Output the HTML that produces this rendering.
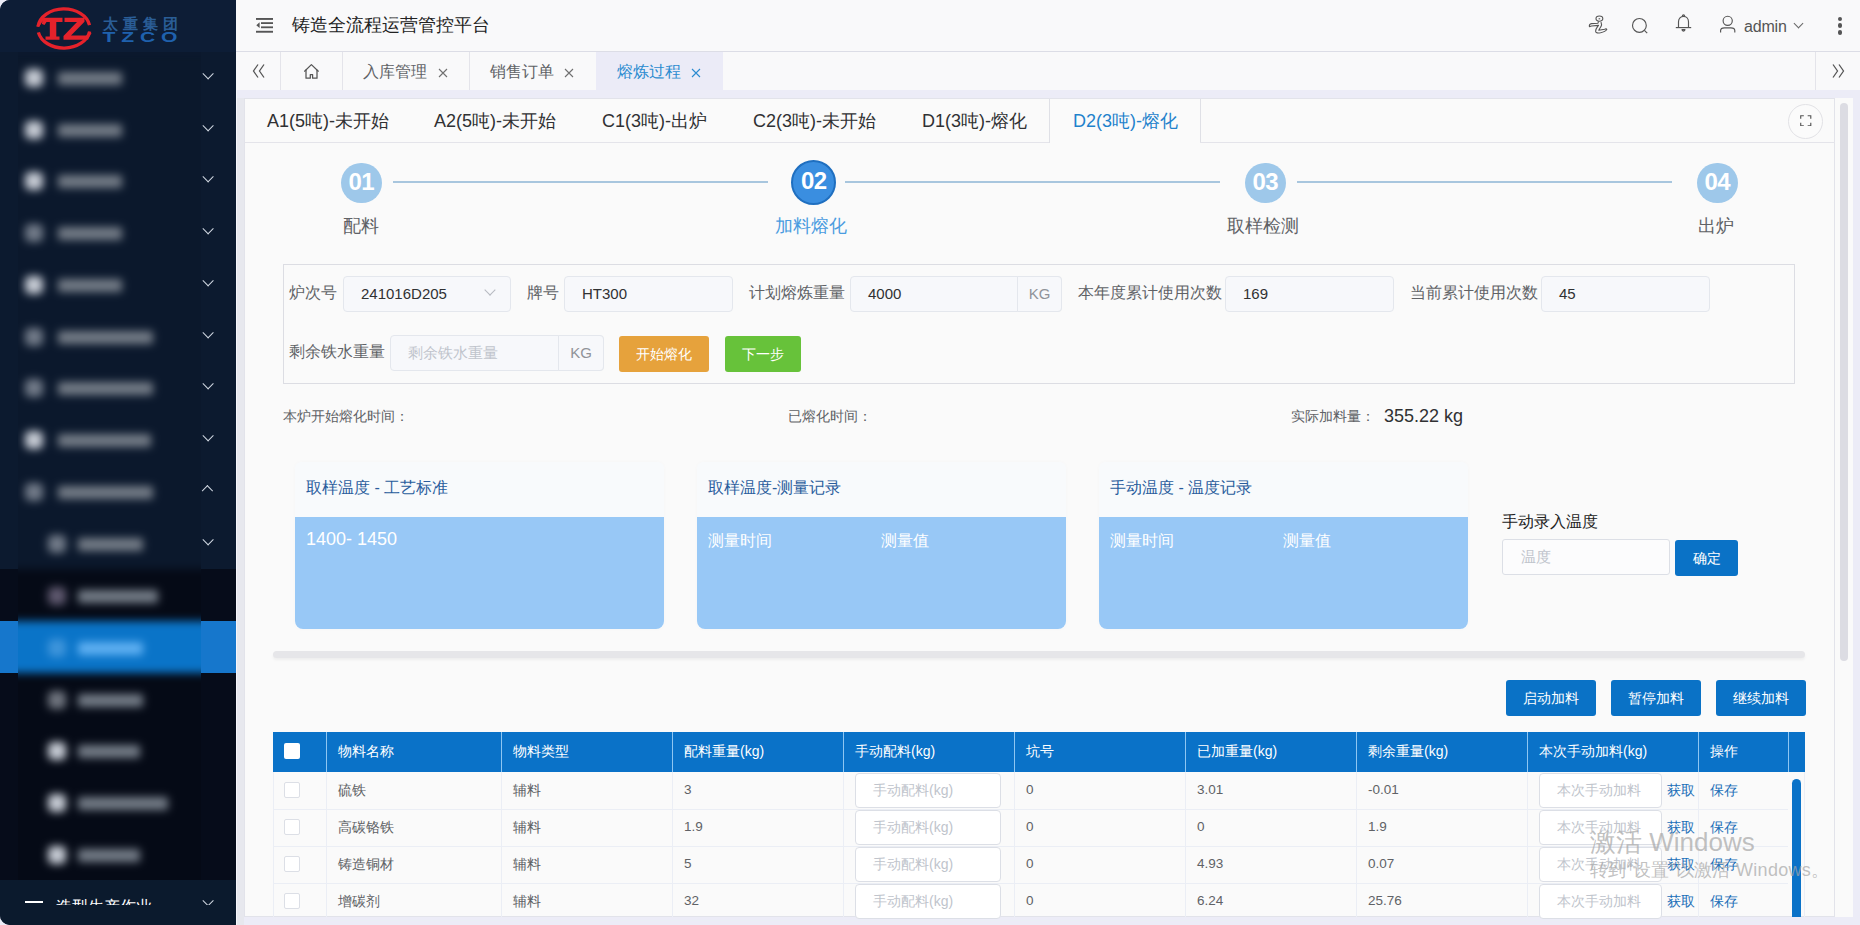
<!DOCTYPE html>
<html><head><meta charset="utf-8">
<style>
*{box-sizing:border-box;margin:0;padding:0}
html,body{width:1860px;height:925px;overflow:hidden;background:#ececf7;font-family:"Liberation Sans",sans-serif;color:#303133}
.a{position:absolute}
#side{left:0;top:0;width:236px;height:925px;background:#0c1a2f;border-radius:10px 0 0 10px;overflow:hidden}
.blur{filter:blur(4.5px)}
.mi{position:absolute;left:0;width:236px;height:52px}
.mi .ic{position:absolute;left:25px;top:17px;width:18px;height:18px;border-radius:5px;background:#c5cad3}
.mi .tx{position:absolute;left:58px;top:19.5px;height:13px;background:#737b86;border-radius:2px}
.chev{position:absolute;left:203.5px;width:7.5px;height:7.5px;border-left:1.7px solid #d3dae4;border-bottom:1.7px solid #d3dae4;transform:rotate(-45deg)}
.chev.up{transform:rotate(135deg)}
#hdr{left:236px;top:0;width:1624px;height:52px;background:#f9f9fa;border-bottom:1px solid #dcdde6}
#tabs{left:236px;top:52px;width:1624px;height:38px;background:#f9f9fa}
#card{left:244px;top:98px;width:1591px;height:819px;background:#fafafa;border:1px solid #e2e3ea}
.tab{top:10px;font-size:18px;line-height:24px;color:#303133;white-space:nowrap}
.step{top:162.5px;width:40.5px;height:40.5px;border-radius:50%;background:#9ec8ea;color:#fff;font-weight:bold;font-size:24px;line-height:37px;text-align:center;letter-spacing:-0.5px}
.step.act{top:160.3px;width:45px;height:45px;line-height:37px;background:#3a8ee0;border:2px solid #1f6fc0}
.slab{top:214px;width:80px;text-align:center;font-size:18px;line-height:24px;color:#606266}
.lbl{font-size:16px;line-height:20px;color:#606266;white-space:nowrap}
.inp{height:36px;border:1px solid #e4e7ed;border-radius:4px;background:#f7f8fb;font-size:15px;line-height:34px;padding-left:17px;color:#303133;white-space:nowrap}
.inp.ph{color:#c0c4cc;font-size:15px}
.app{height:36px;border:1px solid #e4e7ed;border-radius:0 4px 4px 0;background:#f7f8fb;font-size:15px;line-height:34px;text-align:center;color:#909399}
.btn{height:36px;border-radius:3px;color:#fff;font-size:14px;line-height:36px;text-align:center;white-space:nowrap}
.info{top:406px;font-size:14px;line-height:20px;color:#606266;white-space:nowrap}
.pnl{top:462px;width:369px;height:167px;background:#f8fafc;border-radius:6px;box-shadow:0 0 4px rgba(0,0,0,.02)}
.pt{position:absolute;left:11px;top:16px;font-size:16px;line-height:20px;color:#2a5d9c;white-space:nowrap}
.pb{position:absolute;left:0;top:55px;width:369px;height:112px;background:#98c8f6;border-radius:0 0 8px 8px;color:#fff;font-size:16px;line-height:20px;padding:14px 0 0 11px}
.btn2{top:680px;width:90px;height:36px;border-radius:3px;background:#0a72c6;color:#fff;font-size:14px;line-height:36px;text-align:center}
.th{top:741px;font-size:14px;line-height:20px;color:#fff;white-space:nowrap}
.td{font-size:14px;line-height:20px;color:#606266;white-space:nowrap}
.td.lk{color:#1a6fb8}
.tin{height:35px;border:1px solid #dcdfe6;border-radius:4px;background:#fff;font-size:14px;line-height:33px;padding-left:17px;color:#c0c4cc;white-space:nowrap;overflow:hidden}
</style></head><body>
<div id="side" class="a">
  <!-- logo -->
  <div class="a" style="left:0;top:0;width:236px;height:52px;background:#0d1d36"></div>
  <svg class="a" style="left:0;top:0" width="200" height="52" viewBox="0 0 200 52">
    <g fill="none" stroke="#e5222b" stroke-width="3.3">
      <path d="M38.06 26.31 A26 19.6 0 0 1 89.53 25.19"/>
      <path d="M89.59 31.5 A26 19.6 0 0 1 38.4 32.3"/>
    </g>
    <g fill="#e5222b">
      <path d="M42.5 17.7 H62.5 V22 H56.3 V36.6 H59.5 V39.8 H45.5 V36.6 H49.8 V22 H46.5 L44.5 25 L42 24 Z"/>
      <path d="M64.5 17.7 H84.5 V21.8 L71 35.6 H88 L89.6 31.5 L91.5 33 L88 39.8 H63.5 V36 L77 22 H64.5 Z"/>
      <path d="M36.2 26.6 L42.5 17.7 L44 19 L39 27 Z"/>
    </g>
    <text x="102.5" y="28.6" font-size="14.5" font-weight="bold" fill="#2a5d96" textLength="75" lengthAdjust="spacing">太重集团</text>
    <text x="102.5" y="42.2" font-size="14.5" font-weight="bold" fill="#1f61ad" textLength="75" lengthAdjust="spacingAndGlyphs" font-family="Liberation Sans" transform="translate(0,0)">T Z C O</text>
  </svg>
  <!-- bands (sharp) -->
  <div class="a" style="left:0;top:569px;width:236px;height:311px;background:#060c1a"></div>
  <div class="a" style="left:0;top:621px;width:236px;height:52px;background:#1677cc"></div>
  <div class="a" style="left:0;top:880px;width:236px;height:45px;background:#0b1a2d"></div>
  <!-- blurred region -->
  <div class="a" style="left:18px;top:52px;width:183px;height:828px;overflow:hidden">
   <div class="a blur" style="left:-40px;top:-20px;width:270px;height:870px">
    <div class="a" style="left:0;top:20px;width:270px;height:517px;background:#0b182c"></div>
    <div class="a" style="left:0;top:537px;width:270px;height:333px;background:#050a16"></div>
    <div class="a" style="left:0;top:589px;width:270px;height:52px;background:#0a74c8"></div>
    <div style="position:absolute;left:22px;top:20px">
    <div class="mi" style="top:0"><div class="ic"></div><div class="tx" style="width:64px"></div></div>
    <div class="mi" style="top:52px"><div class="ic"></div><div class="tx" style="width:64px"></div></div>
    <div class="mi" style="top:103px"><div class="ic"></div><div class="tx" style="width:64px"></div></div>
    <div class="mi" style="top:155px"><div class="ic" style="opacity:.55"></div><div class="tx" style="width:64px"></div></div>
    <div class="mi" style="top:207px"><div class="ic"></div><div class="tx" style="width:64px"></div></div>
    <div class="mi" style="top:259px"><div class="ic" style="opacity:.55"></div><div class="tx" style="width:95px"></div></div>
    <div class="mi" style="top:310px"><div class="ic" style="opacity:.55"></div><div class="tx" style="width:95px"></div></div>
    <div class="mi" style="top:362px"><div class="ic"></div><div class="tx" style="width:93px"></div></div>
    <div class="mi" style="top:414px"><div class="ic" style="opacity:.55"></div><div class="tx" style="width:95px"></div></div>
    <div class="mi" style="top:466px"><div class="ic" style="left:48px;opacity:.55"></div><div class="tx" style="left:78px;width:65px"></div></div>
    <div class="mi" style="top:518px"><div class="ic" style="left:48px;opacity:.45;background:#c9b6d6"></div><div class="tx" style="left:78px;width:80px"></div></div>
    <div class="mi" style="top:570px"><div class="ic" style="left:48px;opacity:.35;background:#9fd0ff"></div><div class="tx" style="left:78px;width:65px;background:#5fb0f2"></div></div>
    <div class="mi" style="top:622px"><div class="ic" style="left:48px;opacity:.55"></div><div class="tx" style="left:78px;width:65px"></div></div>
    <div class="mi" style="top:673px"><div class="ic" style="left:48px"></div><div class="tx" style="left:78px;width:62px"></div></div>
    <div class="mi" style="top:725px"><div class="ic" style="left:48px"></div><div class="tx" style="left:78px;width:90px"></div></div>
    <div class="mi" style="top:777px"><div class="ic" style="left:48px"></div><div class="tx" style="left:78px;width:62px"></div></div>
    </div>
   </div>
  </div>
  <div class="chev" style="top:70px"></div>
  <div class="chev" style="top:122px"></div>
  <div class="chev" style="top:173px"></div>
  <div class="chev" style="top:225px"></div>
  <div class="chev" style="top:277px"></div>
  <div class="chev" style="top:329px"></div>
  <div class="chev" style="top:380px"></div>
  <div class="chev" style="top:432px"></div>
  <div class="chev up" style="top:487px"></div>
  <div class="chev" style="top:536px"></div>
  <div class="a" style="left:0;top:880px;width:236px;height:25px;overflow:hidden">
    <div class="chev" style="top:17px"></div>
    <div class="a" style="left:25px;top:21px;width:18px;height:2px;background:#fff"></div>
    <div class="a" style="left:56px;top:17px;font-size:16px;color:#fff;line-height:20px;white-space:nowrap">造型生产作业</div>
  </div>
</div>
<div class="a" style="left:236px;top:98px;width:8px;height:827px;background:#e7e8ee"></div>
<div class="a" style="left:236px;top:90px;width:1px;height:835px;background:#f6f6fb"></div>
<div id="hdr" class="a">
  <svg class="a" style="left:20px;top:18px" width="18" height="15" viewBox="0 0 18 15"><g fill="#555"><rect x="0" y="0" width="17" height="1.9"/><rect x="5" y="4.2" width="12" height="1.8"/><rect x="5" y="8.4" width="12" height="1.8"/><rect x="0" y="12.8" width="17" height="1.9"/><path d="M0.3 7.2 L3.6 4.3 L3.6 10.1 Z"/></g></svg>
  <div class="a" style="left:56px;top:13px;font-size:18px;line-height:24px;color:#222">铸造全流程运营管控平台</div>
  <svg class="a" style="left:1350px;top:14px" width="24" height="22" viewBox="0 0 24 22" fill="none" stroke="#555" stroke-width="1.1" stroke-linejoin="round"><ellipse cx="13.4" cy="4.6" rx="3.4" ry="2.6"/><path d="M12.6 4.8 h1.6"/><path d="M12.5 7.3 L12 9.2 L5.5 9.6 C3.8 9.8 3 11 3.4 12.6 L5.5 12 L12.5 11.4 C11 13.5 9.5 15 9.6 17.2 C9.8 19.2 12 19.2 14.5 18.8 C17.5 18.2 20 17 20.8 15.6 C20.6 14.6 19.5 14.8 18.6 15.2 L12.8 16.3 C13.2 14.6 15.2 13 15.6 10.8 L15 8.2"/></svg>
  <svg class="a" style="left:1395px;top:17px" width="18" height="18" viewBox="0 0 18 18" fill="none" stroke="#555" stroke-width="1.15"><circle cx="8.4" cy="8.4" r="6.9"/><path d="M13.4 13.4 L16.2 16.2"/></svg>
  <svg class="a" style="left:1439px;top:14px" width="18" height="20" viewBox="0 0 18 20" fill="none" stroke="#555" stroke-width="1.15" stroke-linejoin="round"><path d="M3.5 13.5 V7.8 C3.5 4.6 5.7 2.4 8.5 2.4 C11.3 2.4 13.5 4.6 13.5 7.8 V13.5"/><path d="M0.8 13.6 H16.2"/><path d="M7.4 1.9 C7.4 0.6 9.6 0.6 9.6 1.9"/><path d="M7 15.6 H10 C10 17.6 7 17.6 7 15.6 Z"/></svg>
  <svg class="a" style="left:1483px;top:14px" width="18" height="20" viewBox="0 0 18 20" fill="none" stroke="#555" stroke-width="1.15"><circle cx="8.7" cy="6.8" r="4.6"/><path d="M1.6 18.4 V16.6 C1.6 14.6 3.4 13.8 5.5 13.8 H11.9 C14 13.8 15.8 14.6 15.8 16.6 V18.4"/></svg>
  <div class="a" style="left:1508px;top:17px;font-size:16px;line-height:20px;color:#555;letter-spacing:-0.2px">admin</div>
  <div class="a" style="left:1559px;top:20px;width:7px;height:7px;border-left:1.3px solid #666;border-bottom:1.3px solid #666;transform:rotate(-45deg)"></div>
  <div class="a" style="left:1601.5px;top:16.5px;width:4.5px;height:4.5px;border-radius:50%;background:#555"></div>
  <div class="a" style="left:1601.5px;top:23.2px;width:4.5px;height:4.5px;border-radius:50%;background:#555"></div>
  <div class="a" style="left:1601.5px;top:30px;width:4.5px;height:4.5px;border-radius:50%;background:#555"></div>
</div>
<div id="tabs" class="a">
  <div class="a" style="left:44px;top:0;width:1px;height:38px;background:#e4e4ea"></div>
  <div class="a" style="left:106px;top:0;width:1px;height:38px;background:#e4e4ea"></div>
  <div class="a" style="left:233px;top:0;width:1px;height:38px;background:#e4e4ea"></div>
  <div class="a" style="left:360px;top:0;width:127px;height:38px;background:#ebebf7"></div>
  <div class="a" style="left:1579px;top:0;width:1px;height:38px;background:#e4e4ea"></div>
  <svg class="a" style="left:16px;top:11px" width="14" height="16" viewBox="0 0 14 16" fill="none" stroke="#555" stroke-width="1.3"><path d="M6 1.5 L1.5 8 L6 14.5"/><path d="M12 1.5 L7.5 8 L12 14.5"/></svg>
  <svg class="a" style="left:67px;top:11px" width="17" height="17" viewBox="0 0 17 17" fill="none" stroke="#555" stroke-width="1.25" stroke-linejoin="round" stroke-linecap="round"><path d="M1.6 8.2 L8.4 1.6 L15.3 8.2"/><path d="M3 7 V15.2 H7.3 V11.5 H9.6 V15.2 H14 V7"/></svg>
  <div class="a" style="left:127px;top:9.5px;font-size:16px;line-height:20px;color:#606266">入库管理</div>
  <svg class="a" style="left:202px;top:16px" width="10" height="10" viewBox="0 0 10 10" fill="none" stroke="#707070" stroke-width="1.1"><path d="M1 1 L9 9 M9 1 L1 9"/></svg>
  <div class="a" style="left:254px;top:9.5px;font-size:16px;line-height:20px;color:#606266">销售订单</div>
  <svg class="a" style="left:328px;top:16px" width="10" height="10" viewBox="0 0 10 10" fill="none" stroke="#707070" stroke-width="1.1"><path d="M1 1 L9 9 M9 1 L1 9"/></svg>
  <div class="a" style="left:381px;top:9.5px;font-size:16px;line-height:20px;color:#2b8bd0">熔炼过程</div>
  <svg class="a" style="left:455px;top:16px" width="10" height="10" viewBox="0 0 10 10" fill="none" stroke="#2b8bd0" stroke-width="1.1"><path d="M1 1 L9 9 M9 1 L1 9"/></svg>
  <svg class="a" style="left:1595px;top:10.5px" width="14" height="16" viewBox="0 0 14 16" fill="none" stroke="#555" stroke-width="1.3"><path d="M2 1.5 L6.5 8 L2 14.5"/><path d="M8 1.5 L12.5 8 L8 14.5"/></svg>
</div>
<div id="card" class="a">
  <!-- inner tabs: card origin is (244,98) incl border -->
  <div class="a" style="left:0;top:43px;width:804px;height:1px;background:#e4e4ea"></div>
  <div class="a" style="left:804px;top:0;width:1px;height:44px;background:#dfe0e6"></div>
  <div class="a" style="left:955px;top:0;width:1px;height:44px;background:#dfe0e6"></div>
  <div class="a" style="left:955px;top:43px;width:635px;height:1px;background:#e4e4ea"></div>
  <div class="a tab" style="left:22px">A1(5吨)-未开始</div>
  <div class="a tab" style="left:189px">A2(5吨)-未开始</div>
  <div class="a tab" style="left:357px">C1(3吨)-出炉</div>
  <div class="a tab" style="left:508px">C2(3吨)-未开始</div>
  <div class="a tab" style="left:677px">D1(3吨)-熔化</div>
  <div class="a tab" style="left:828px;color:#1f82cc">D2(3吨)-熔化</div>
  <div class="a" style="left:1543px;top:5px;width:35px;height:35px;border-radius:50%;border:1px solid #e2e2e6;background:#fbfbfb"></div>
  <svg class="a" style="left:1555px;top:15.5px" width="11.5" height="11.5" viewBox="0 0 12 12" fill="none" stroke="#555" stroke-width="1.2"><path d="M0.75 4 V0.75 H4 M8 0.75 H11.25 V4 M11.25 8 V11.25 H8 M4 11.25 H0.75 V8"/></svg>
</div>
<!-- scrollbar -->
<div class="a" style="left:1835px;top:98px;width:18px;height:819px;background:#fafafa"></div>
<div class="a" style="left:1840px;top:103px;width:8px;height:558px;border-radius:4px;background:#dcdce3"></div>
<!-- form box -->
<div class="a" style="left:283px;top:264px;width:1512px;height:120px;border:1px solid #dcdde3"></div>
<div class="a lbl" style="left:289px;top:283px">炉次号</div>
<div class="a inp" style="left:343px;top:276px;width:168px">241016D205</div>
<div class="a" style="left:486px;top:286px;width:8px;height:8px;border-left:1.2px solid #b6b9c0;border-bottom:1.2px solid #b6b9c0;transform:rotate(-45deg)"></div>
<div class="a lbl" style="left:527px;top:283px">牌号</div>
<div class="a inp" style="left:564px;top:276px;width:169px">HT300</div>
<div class="a lbl" style="left:749px;top:283px">计划熔炼重量</div>
<div class="a inp" style="left:850px;top:276px;width:212px">4000</div>
<div class="a app" style="left:1017px;top:276px;width:45px">KG</div>
<div class="a lbl" style="left:1078px;top:283px">本年度累计使用次数</div>
<div class="a inp" style="left:1225px;top:276px;width:169px">169</div>
<div class="a lbl" style="left:1410px;top:283px">当前累计使用次数</div>
<div class="a inp" style="left:1541px;top:276px;width:169px">45</div>
<div class="a lbl" style="left:289px;top:342px">剩余铁水重量</div>
<div class="a inp ph" style="left:390px;top:335px;width:214px">剩余铁水重量</div>
<div class="a app" style="left:558px;top:335px;width:46px">KG</div>
<div class="a btn" style="left:619px;top:336px;width:90px;background:#e6a23c">开始熔化</div>
<div class="a btn" style="left:725px;top:336px;width:76px;background:#67c23a">下一步</div>
<!-- info row -->
<div class="a info" style="left:283px">本炉开始熔化时间：</div>
<div class="a info" style="left:788px">已熔化时间：</div>
<div class="a info" style="left:1291px">实际加料量：</div>
<div class="a" style="left:1384px;top:405px;font-size:18px;line-height:22px;color:#303133">355.22 kg</div>
<!-- temperature panels -->
<div class="a pnl" style="left:295px"><div class="pt">取样温度 - 工艺标准</div><div class="pb" style="padding-top:12px"><span style="font-size:18px">1400- 1450</span></div></div>
<div class="a pnl" style="left:697px"><div class="pt">取样温度-测量记录</div><div class="pb"><span>测量时间</span><span style="position:absolute;left:184px">测量值</span></div></div>
<div class="a pnl" style="left:1099px"><div class="pt">手动温度 - 温度记录</div><div class="pb"><span>测量时间</span><span style="position:absolute;left:184px">测量值</span></div></div>
<div class="a" style="left:1502px;top:512px;font-size:16px;line-height:20px;color:#222">手动录入温度</div>
<div class="a" style="left:1502px;top:539px;width:168px;height:36px;border:1px solid #dcdfe6;border-radius:3px;background:#fcfcfd;font-size:15px;line-height:34px;padding-left:18px;color:#c0c4cc">温度</div>
<div class="a btn" style="left:1675px;top:540px;width:63px;height:36px;line-height:36px;background:#0a72c6;font-size:14px">确定</div>
<!-- divider shadow -->
<div class="a" style="left:273px;top:651px;width:1532px;height:7px;border-radius:4px;background:#e6e6e9;box-shadow:0 2px 3px rgba(0,0,0,.05)"></div>
<!-- action buttons -->
<div class="a btn2" style="left:1506px">启动加料</div>
<div class="a btn2" style="left:1611px">暂停加料</div>
<div class="a btn2" style="left:1716px">继续加料</div>
<!-- table -->
<div class="a" style="left:273px;top:732px;width:1532px;height:40px;background:#0a72c8"></div>
<div class="a" style="left:326px;top:732px;width:1px;height:40px;background:#8ec6f2"></div>
<div class="a" style="left:326px;top:772px;width:1px;height:145px;background:#ebeef5"></div>
<div class="a" style="left:501px;top:732px;width:1px;height:40px;background:#8ec6f2"></div>
<div class="a" style="left:501px;top:772px;width:1px;height:145px;background:#ebeef5"></div>
<div class="a" style="left:672px;top:732px;width:1px;height:40px;background:#8ec6f2"></div>
<div class="a" style="left:672px;top:772px;width:1px;height:145px;background:#ebeef5"></div>
<div class="a" style="left:843px;top:732px;width:1px;height:40px;background:#8ec6f2"></div>
<div class="a" style="left:843px;top:772px;width:1px;height:145px;background:#ebeef5"></div>
<div class="a" style="left:1014px;top:732px;width:1px;height:40px;background:#8ec6f2"></div>
<div class="a" style="left:1014px;top:772px;width:1px;height:145px;background:#ebeef5"></div>
<div class="a" style="left:1185px;top:732px;width:1px;height:40px;background:#8ec6f2"></div>
<div class="a" style="left:1185px;top:772px;width:1px;height:145px;background:#ebeef5"></div>
<div class="a" style="left:1356px;top:732px;width:1px;height:40px;background:#8ec6f2"></div>
<div class="a" style="left:1356px;top:772px;width:1px;height:145px;background:#ebeef5"></div>
<div class="a" style="left:1527px;top:732px;width:1px;height:40px;background:#8ec6f2"></div>
<div class="a" style="left:1527px;top:772px;width:1px;height:145px;background:#ebeef5"></div>
<div class="a" style="left:1698px;top:732px;width:1px;height:40px;background:#8ec6f2"></div>
<div class="a" style="left:1698px;top:772px;width:1px;height:145px;background:#ebeef5"></div>
<div class="a" style="left:1788px;top:732px;width:1px;height:40px;background:#8ec6f2"></div>
<div class="a" style="left:273px;top:772px;width:1px;height:145px;background:#ebeef5"></div>
<div class="a" style="left:1804px;top:772px;width:1px;height:145px;background:#ebeef5"></div>
<div class="a th" style="left:338px">物料名称</div>
<div class="a th" style="left:513px">物料类型</div>
<div class="a th" style="left:684px">配料重量(kg)</div>
<div class="a th" style="left:855px">手动配料(kg)</div>
<div class="a th" style="left:1026px">坑号</div>
<div class="a th" style="left:1197px">已加重量(kg)</div>
<div class="a th" style="left:1368px">剩余重量(kg)</div>
<div class="a th" style="left:1539px">本次手动加料(kg)</div>
<div class="a th" style="left:1710px">操作</div>
<div class="a" style="left:284px;top:743px;width:16px;height:16px;border-radius:2px;background:#fff"></div>
<div class="a" style="left:273px;top:809px;width:1515px;height:1px;background:#ebeef5"></div>
<div class="a" style="left:284px;top:782px;width:16px;height:16px;border:1px solid #dcdfe6;border-radius:2px;background:#fff"></div>
<div class="a td" style="left:338px;top:780px">硫铁</div>
<div class="a td" style="left:513px;top:780px">辅料</div>
<div class="a td" style="left:684px;top:780px;font-size:13.5px">3</div>
<div class="a tin" style="left:855px;top:773px;width:146px">手动配料(kg)</div>
<div class="a td" style="left:1026px;top:780px;font-size:13.5px">0</div>
<div class="a td" style="left:1197px;top:780px;font-size:13.5px">3.01</div>
<div class="a td" style="left:1368px;top:780px;font-size:13.5px">-0.01</div>
<div class="a tin" style="left:1539px;top:773px;width:123px">本次手动加料</div>
<div class="a td lk" style="left:1667px;top:780px">获取</div>
<div class="a td lk" style="left:1710px;top:780px">保存</div>
<div class="a" style="left:273px;top:846px;width:1515px;height:1px;background:#ebeef5"></div>
<div class="a" style="left:284px;top:819px;width:16px;height:16px;border:1px solid #dcdfe6;border-radius:2px;background:#fff"></div>
<div class="a td" style="left:338px;top:817px">高碳铬铁</div>
<div class="a td" style="left:513px;top:817px">辅料</div>
<div class="a td" style="left:684px;top:817px;font-size:13.5px">1.9</div>
<div class="a tin" style="left:855px;top:810px;width:146px">手动配料(kg)</div>
<div class="a td" style="left:1026px;top:817px;font-size:13.5px">0</div>
<div class="a td" style="left:1197px;top:817px;font-size:13.5px">0</div>
<div class="a td" style="left:1368px;top:817px;font-size:13.5px">1.9</div>
<div class="a tin" style="left:1539px;top:810px;width:123px">本次手动加料</div>
<div class="a td lk" style="left:1667px;top:817px">获取</div>
<div class="a td lk" style="left:1710px;top:817px">保存</div>
<div class="a" style="left:273px;top:883px;width:1515px;height:1px;background:#ebeef5"></div>
<div class="a" style="left:284px;top:856px;width:16px;height:16px;border:1px solid #dcdfe6;border-radius:2px;background:#fff"></div>
<div class="a td" style="left:338px;top:854px">铸造铜材</div>
<div class="a td" style="left:513px;top:854px">辅料</div>
<div class="a td" style="left:684px;top:854px;font-size:13.5px">5</div>
<div class="a tin" style="left:855px;top:847px;width:146px">手动配料(kg)</div>
<div class="a td" style="left:1026px;top:854px;font-size:13.5px">0</div>
<div class="a td" style="left:1197px;top:854px;font-size:13.5px">4.93</div>
<div class="a td" style="left:1368px;top:854px;font-size:13.5px">0.07</div>
<div class="a tin" style="left:1539px;top:847px;width:123px">本次手动加料</div>
<div class="a td lk" style="left:1667px;top:854px">获取</div>
<div class="a td lk" style="left:1710px;top:854px">保存</div>
<div class="a" style="left:273px;top:920px;width:1515px;height:1px;background:#ebeef5"></div>
<div class="a" style="left:284px;top:893px;width:16px;height:16px;border:1px solid #dcdfe6;border-radius:2px;background:#fff"></div>
<div class="a td" style="left:338px;top:891px">增碳剂</div>
<div class="a td" style="left:513px;top:891px">辅料</div>
<div class="a td" style="left:684px;top:891px;font-size:13.5px">32</div>
<div class="a tin" style="left:855px;top:884px;width:146px">手动配料(kg)</div>
<div class="a td" style="left:1026px;top:891px;font-size:13.5px">0</div>
<div class="a td" style="left:1197px;top:891px;font-size:13.5px">6.24</div>
<div class="a td" style="left:1368px;top:891px;font-size:13.5px">25.76</div>
<div class="a tin" style="left:1539px;top:884px;width:123px">本次手动加料</div>
<div class="a td lk" style="left:1667px;top:891px">获取</div>
<div class="a td lk" style="left:1710px;top:891px">保存</div>
<div class="a" style="left:1792px;top:779px;width:9px;height:138px;border-radius:5px 5px 0 0;background:#0a72c8"></div>
<div class="a" style="left:1590px;top:826px;font-size:26px;line-height:32px;color:rgba(165,165,165,.7);white-space:nowrap">激活 Windows</div>
<div class="a" style="left:1590px;top:859px;font-size:18px;line-height:22px;color:rgba(165,165,165,.7);letter-spacing:0.3px;white-space:nowrap">转到“设置”以激活 Windows。</div>
<!-- steps -->
<div class="a" style="left:393px;top:181px;width:375px;height:2px;background:#a8c6de"></div>
<div class="a" style="left:845px;top:181px;width:375px;height:2px;background:#a8c6de"></div>
<div class="a" style="left:1297px;top:181px;width:375px;height:2px;background:#a8c6de"></div>
<div class="a step" style="left:341px">01</div>
<div class="a step act" style="left:791.3px">02</div>
<div class="a step" style="left:1245px">03</div>
<div class="a step" style="left:1697px">04</div>
<div class="a slab" style="left:321px">配料</div>
<div class="a slab" style="left:771px;color:#4a9ce0">加料熔化</div>
<div class="a slab" style="left:1223px">取样检测</div>
<div class="a slab" style="left:1676px">出炉</div>

</body></html>
